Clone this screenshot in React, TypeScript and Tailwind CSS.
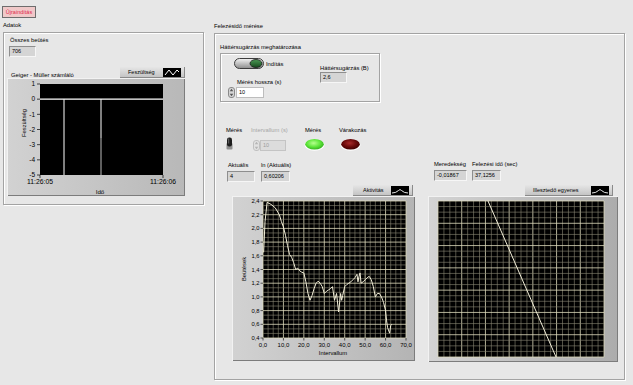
import React from "react";

const lbl = "text-[5.8px] leading-[8px] whitespace-nowrap";

// measured from the "Aktivitás" plot
const activity: [number, number][] = [
  [0.3, 1.65], [1, 2.1], [2, 2.38], [4, 2.35], [6, 2.3], [8, 2.2], [9, 2.1], [10, 2.02],
  [11, 1.9], [12, 1.75], [13, 1.62], [14, 1.58], [15, 1.5], [16, 1.4], [17, 1.42], [18, 1.38],
  [19, 1.36], [20, 1.35], [21, 1.22], [22, 1.05], [23, 0.95], [24, 1.02], [25, 1.12], [26, 1.2],
  [27, 1.23], [28, 1.2], [29, 1.15], [30, 1.05], [31, 1.08], [32, 1.1], [33, 1.12], [34, 1.15],
  [35, 0.95], [36, 1.05], [37, 0.78], [38, 1.05], [38.5, 0.95], [39, 1.02], [40, 1.15], [41, 1.18],
  [42, 1.2], [43, 1.22], [44, 1.25], [45, 1.28], [46, 1.33], [46.5, 1.22], [47, 1.3], [47.5, 1.35],
  [48, 1.2], [49, 1.22], [50, 1.25], [51, 1.28], [52, 1.3], [53, 1.25], [54, 1.15], [55, 1.0],
  [56, 1.05], [57, 1.05], [58, 1.0], [59, 0.92], [60, 0.8], [60.5, 0.65], [61, 0.55], [62, 0.47],
  [62.5, 0.58], [63, 0.6],
];

function GroupBox({ className, children }: any) {
  return (
    <div className={"border border-[#a3a3a3] shadow-[inset_1px_1px_0_#ffffff,1px_1px_0_#ffffff] " + className}>
      {children}
    </div>
  );
}

function Indicator({ value, className }: any) {
  return (
    <div
      className={
        "h-[11px] bg-[#d5d5d5] border border-t-[#8e8e8e] border-l-[#8e8e8e] border-r-[#f6f6f6] border-b-[#f6f6f6] pl-[2px] text-[5.5px] leading-[9px] " +
        className
      }
    >
      {value}
    </div>
  );
}

function Legend({ name, swatch, className, textClass }: any) {
  return (
    <div
      className={
        "flex items-center h-[11px] bg-linear-to-b from-[#e6e6e6] to-[#c4c4c4] border-r border-b border-[#8a8a8a] " + className
      }
    >
      <span className={"text-[5.5px] leading-[8px] " + textClass}>{name}</span>
      <div className="ml-auto mr-[3px] h-[9px] w-[18px] bg-black">{swatch}</div>
    </div>
  );
}

const Zig = () => (
  <svg width="18" height="9">
    <path d="M2 7 L6 2 L10 7 L14 2 L16 4" stroke="#fff" strokeWidth="1" fill="none" />
  </svg>
);
const Bump = () => (
  <svg width="18" height="9">
    <path d="M1 7 Q5 7 7.5 4.5 Q9 2.5 10.5 4.5 Q13 7 17 7" stroke="#fff" strokeWidth="0.9" fill="none" />
  </svg>
);

function Spinner({ dim }: any) {
  const c = dim ? "#b5b5b5" : "#555";
  return (
    <svg width="7" height="11" className="block">
      <rect x="0.5" y="0.5" width="6" height="10" rx="2.5" fill={dim ? "#e2e2e2" : "#d6d6d6"} stroke={dim ? "#c0c0c0" : "#8a8a8a"} />
      <path d="M3.5 1.8 L5.3 4.3 L1.7 4.3 Z" fill={c} />
      <path d="M3.5 9.2 L5.3 6.7 L1.7 6.7 Z" fill={c} />
    </svg>
  );
}

function Led({ on }: any) {
  const id = on ? "ledg" : "ledr";
  return (
    <svg width="21" height="13" className="block">
      <defs>
        <radialGradient id={id} cx="45%" cy="40%" r="65%">
          <stop offset="0" stopColor={on ? "#b6ff8e" : "#a82a2a"} />
          <stop offset="0.55" stopColor={on ? "#5ee63a" : "#6a0a0a"} />
          <stop offset="1" stopColor={on ? "#2fa81c" : "#380000"} />
        </radialGradient>
      </defs>
      <ellipse cx="10.5" cy="7" rx="10" ry="5.8" fill="#ffffff" />
      <ellipse cx="10.5" cy="6.2" rx="9.3" ry="5.3" fill={"url(#" + id + ")"} />
    </svg>
  );
}

function PillSwitch() {
  return (
    <svg width="30" height="11" className="block">
      <defs>
        <linearGradient id="pill" x1="0" y1="0" x2="0" y2="1">
          <stop offset="0" stopColor="#f4f4f4" />
          <stop offset="1" stopColor="#8c8c8c" />
        </linearGradient>
        <linearGradient id="knob" x1="0" y1="0" x2="0" y2="1">
          <stop offset="0" stopColor="#4d9a56" />
          <stop offset="1" stopColor="#174a1e" />
        </linearGradient>
      </defs>
      <rect x="0.5" y="0.5" width="29" height="10" rx="5" fill="url(#pill)" stroke="#3c3c3c" />
      <ellipse cx="22" cy="5.5" rx="6" ry="4" fill="url(#knob)" stroke="#1b1b1b" strokeWidth="0.8" />
    </svg>
  );
}

function LeverSwitch() {
  return (
    <svg width="7" height="13" className="block">
      <rect x="0.5" y="6" width="6" height="6.5" rx="1" fill="#8e8e8e" />
      <rect x="1" y="0.5" width="5" height="9" rx="2.2" fill="#1e1e1e" />
      <rect x="2" y="1.5" width="1.2" height="5" fill="#5a5a5a" />
    </svg>
  );
}

function Grid({ x, y, w, h, nx, ny, sx, sy }: any) {
  const lines: React.ReactNode[] = [];
  for (let i = 0; i <= nx * sx; i++) {
    const xx = x + (i * w) / (nx * sx);
    const major = i % sx === 0;
    lines.push(
      <line key={"v" + i} x1={xx} y1={y} x2={xx} y2={y + h} stroke={major ? "#dedabc" : "#8a8774"} strokeWidth={major ? 0.8 : 0.6} />
    );
  }
  for (let j = 0; j <= ny * sy; j++) {
    const yy = y + (j * h) / (ny * sy);
    const major = j % sy === 0;
    lines.push(
      <line key={"h" + j} x1={x} y1={yy} x2={x + w} y2={yy} stroke={major ? "#dedabc" : "#8a8774"} strokeWidth={major ? 0.8 : 0.6} />
    );
  }
  return <g>{lines}</g>;
}

function VoltageGraph() {
  const ys = ["1", "0", "-1", "-2", "-3", "-4", "-5"];
  return (
    <div className="ml-[3px] w-[178px] h-[118px] bg-linear-to-r from-[#d2d2d2] to-[#b8b8b8] shadow-[inset_1px_1px_0_#f2f2f2,inset_-1px_-1px_0_#7c7c7c]">
      <svg width="178" height="118" className="block">
        <rect x="33" y="6" width="123" height="91" fill="#000" />
        {ys.map((t, i) => {
          const yy = 6 + (i * 91) / 6;
          return (
            <g key={t}>
              <line x1="30" y1={yy} x2="33" y2={yy} stroke="#000" strokeWidth="0.7" />
              <text x="28" y={yy + 2.2} fontSize="6.5" textAnchor="end">{t}</text>
            </g>
          );
        })}
        <line x1="33" y1="97" x2="33" y2="100" stroke="#000" strokeWidth="0.7" />
        <line x1="156" y1="97" x2="156" y2="100" stroke="#000" strokeWidth="0.7" />
        <line x1="33" y1={6 + 91 / 6} x2="156" y2={6 + 91 / 6} stroke="#fff" strokeWidth="1.2" />
        <line x1="57" y1={6 + 91 / 6} x2="57" y2="97" stroke="#fff" strokeWidth="1" />
        <line x1="94" y1={6 + 91 / 6} x2="94" y2="60" stroke="#fff" strokeWidth="1" />
        <line x1="94" y1="60" x2="94" y2="97" stroke="#bdbdbd" strokeWidth="1" />
        <text x="33" y="106" fontSize="6.8" textAnchor="middle">11:26:05</text>
        <text x="156" y="106" fontSize="6.8" textAnchor="middle">11:26:06</text>
        <text x="93" y="116" fontSize="6.2" textAnchor="middle">Idő</text>
        <text transform="translate(19,45) rotate(-90)" fontSize="5.8" textAnchor="middle">Feszültség</text>
      </svg>
    </div>
  );
}

function ActivityGraph() {
  const X0 = 30, Y0 = 5, W = 143, H = 137;
  const ys = ["2,4", "2,2", "2,0", "1,8", "1,6", "1,4", "1,2", "1,0", "0,8", "0,6", "0,4"];
  const xs = ["0,0", "10,0", "20,0", "30,0", "40,0", "50,0", "60,0", "70,0"];
  const pts = activity.map(([a, b]) => `${X0 + (a * W) / 70},${Y0 + ((2.4 - b) * H) / 2}`).join(" ");
  return (
    <div className="ml-[6px] w-[183px] h-[165px] bg-linear-to-r from-[#d2d2d2] to-[#b4b4b4] shadow-[inset_1px_1px_0_#f2f2f2,inset_-1px_-1px_0_#7c7c7c]">
      <svg width="183" height="165" className="block">
        <rect x={X0 + 1} y={Y0} width={W} height={H} fill="#000" />
        <g transform="translate(1,0)">
          <Grid x={X0} y={Y0} w={W} h={H} nx={7} ny={10} sx={4} sy={3} />
          <polyline points={pts} fill="none" stroke="#f2eed8" strokeWidth="1" />
          {ys.map((t, i) => {
            const yy = Y0 + (i * H) / 10;
            return (
              <g key={t}>
                <line x1="27.5" y1={yy} x2={X0} y2={yy} stroke="#000" strokeWidth="0.6" />
                <text x="26.5" y={yy + 2} fontSize="5.8" textAnchor="end">{t}</text>
              </g>
            );
          })}
          {xs.map((t, i) => {
            const xx = X0 + (i * W) / 7;
            return (
              <g key={t}>
                <line x1={xx} y1={Y0 + H} x2={xx} y2={Y0 + H + 2.5} stroke="#000" strokeWidth="0.6" />
                <text x={xx} y="151" fontSize="6" textAnchor="middle">{t}</text>
              </g>
            );
          })}
          <text x="100" y="159" fontSize="5.8" textAnchor="middle">Intervallum</text>
          <text transform="translate(13,73) rotate(-90)" fontSize="5.8" textAnchor="middle">Beütések</text>
        </g>
      </svg>
    </div>
  );
}

function FitGraph() {
  const X0 = 10, Y0 = 5, W = 166, H = 156;
  return (
    <div className="w-[190px] h-[166px] bg-linear-to-r from-[#d4d4d4] to-[#acacac] shadow-[inset_1px_1px_0_#f2f2f2,inset_-1px_-1px_0_#7c7c7c]">
      <svg width="190" height="166" className="block">
        <rect x={X0} y={Y0} width={W} height={H} fill="#000" />
        <Grid x={X0} y={Y0} w={W} h={H} nx={7} ny={7} sx={4} sy={4} />
        <line x1={X0 + 50} y1={Y0} x2={X0 + 118} y2={Y0 + H} stroke="#f2eed8" strokeWidth="1" />
      </svg>
    </div>
  );
}

export default function App() {
  return (
    <div className="relative w-[633px] h-[385px] overflow-hidden bg-[#e7e7e7] font-['Liberation_Sans',Arial,sans-serif] text-black">
      <div className="pt-[6px] pl-[2px]">
        <button className="block w-[34px] h-[12px] p-0 bg-[#f0c9c9] border border-[#6d6d6d] text-[5.5px] leading-[10px] text-[#e0284c] text-center">
          Újraindítás
        </button>
      </div>

      <div className="flex">
        {/* Adatok */}
        <div className="ml-[3px] w-[201px]">
          <div className={lbl + " h-[14px] pt-[3px]"}>Adatok</div>
          <GroupBox className="h-[173px]">
            <div className={lbl + " mt-[3px] ml-[6px]"}>Összes beütés</div>
            <Indicator value="706" className="mt-[2px] ml-[5px] w-[27px]" />
            <div className="mt-[10px] flex w-[181px] h-[11px]">
              <div className={lbl + " mt-[4px] ml-[7px]"}>Geiger - Müller számláló</div>
              <Legend name="Feszültség" swatch={<Zig />} className="ml-auto w-[65px]" textClass="ml-[8px]" />
            </div>
            <VoltageGraph />
          </GroupBox>
        </div>

        {/* Felezésidő mérése */}
        <div className="ml-[10px] w-[411px]">
          <div className={lbl + " h-[15px] pt-[4px]"}>Felezésidő mérése</div>
          <GroupBox className="h-[347px]">
            <div className={lbl + " mt-[9px] ml-[5px]"}>Háttérsugárzás meghatározása</div>
            <GroupBox className="mt-[2px] ml-[5px] w-[160px] h-[49px] flex">
              <div className="w-[99px]">
                <div className="mt-[4px] ml-[13px] flex items-center">
                  <PillSwitch />
                  <span className={lbl + " ml-[2px]"}>Indítás</span>
                </div>
                <div className={lbl + " mt-[9px] ml-[16px]"}>Mérés hossza (s)</div>
                <div className="mt-[1px] ml-[7px] flex">
                  <Spinner />
                  <div className="ml-[1px] w-[28px] h-[11px] bg-white border border-[#bdbdbd] pl-[2px] text-[5.5px] leading-[9px]">10</div>
                </div>
              </div>
              <div>
                <div className={lbl + " mt-[10px]"}>Háttérsugárzás (B)</div>
                <Indicator value="2,6" className="w-[27px]" />
              </div>
            </GroupBox>

            <div className="flex">
              {/* left column: controls + Aktivitás graph */}
              <div className="ml-[11px] w-[189px]">
                <div className="mt-[24px] flex">
                  <div className="w-[25px]">
                    <div className={lbl}>Mérés</div>
                    <div className="mt-[3px]">
                      <LeverSwitch />
                    </div>
                  </div>
                  <div className="w-[53px]">
                    <div className={lbl + " text-[#a6a6a6]"}>Intervallum (s)</div>
                    <div className="mt-[6px] ml-[2px] flex">
                      <Spinner dim />
                      <div className="w-[26px] h-[11px] bg-[#dcdcdc] border border-[#c4c4c4] pl-[2px] text-[5.5px] leading-[9px] text-[#9c9c9c]">10</div>
                    </div>
                  </div>
                  <div className="w-[35px]">
                    <div className={lbl + " ml-[1px]"}>Mérés</div>
                    <div className="mt-[4px]">
                      <Led on />
                    </div>
                  </div>
                  <div>
                    <div className={lbl}>Várakozás</div>
                    <div className="mt-[4px] ml-[1px]">
                      <Led />
                    </div>
                  </div>
                </div>

                <div className="mt-[10px] flex">
                  <div className="ml-[1px] w-[34px]">
                    <div className={lbl + " ml-[1px]"}>Aktuális</div>
                    <Indicator value="4" className="mt-[2px] w-[28px]" />
                  </div>
                  <div>
                    <div className={lbl}>ln (Aktuális)</div>
                    <Indicator value="0,60206" className="mt-[2px] w-[29px]" />
                  </div>
                </div>

                <div className="mt-[3px] flex justify-end pr-[2px]">
                  <Legend name="Aktivitás" swatch={<Bump />} className="w-[60px]" textClass="ml-[10px]" />
                </div>
                <ActivityGraph />
              </div>

              {/* right column: fit graph */}
              <div className="ml-[13px] w-[190px]">
                <div className="mt-[58px] flex">
                  <div className="ml-[6px] w-[38px]">
                    <div className={lbl}>Meredekség</div>
                    <Indicator value="-0,01867" className="mt-[2px] w-[33px]" />
                  </div>
                  <div>
                    <div className={lbl}>Felezési idő (sec)</div>
                    <Indicator value="37,1256" className="mt-[2px] w-[29px]" />
                  </div>
                </div>
                <div className="mt-[4px] flex justify-end pr-[5px]">
                  <Legend name="Illesztedő egyenes" swatch={<Bump />} className="w-[88px]" textClass="ml-[8px]" />
                </div>
                <FitGraph />
              </div>
            </div>
          </GroupBox>
        </div>
      </div>
    </div>
  );
}
